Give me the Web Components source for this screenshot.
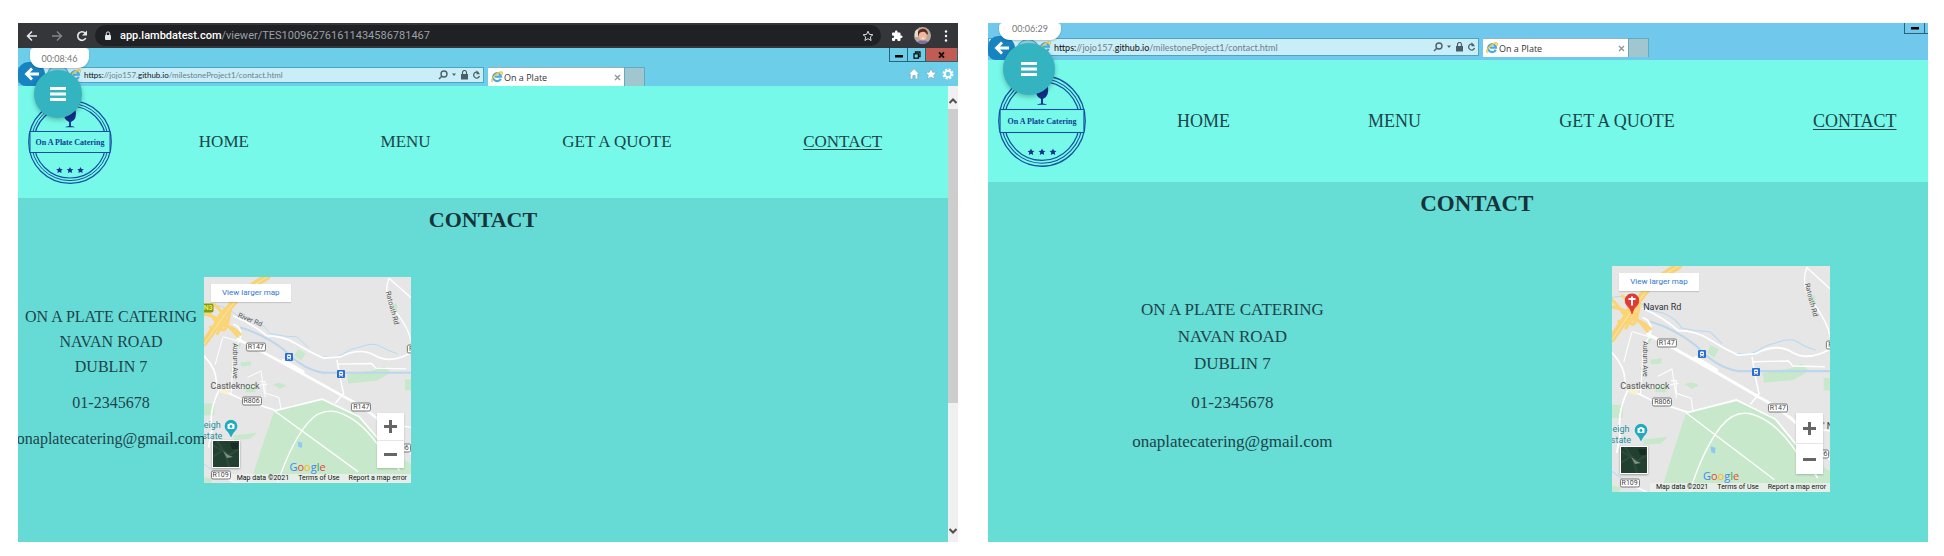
<!DOCTYPE html>
<html lang="en">
<head>
<meta charset="utf-8">
<title>On a Plate - Contact</title>
<style>
  html, body { margin: 0; background: #fff; }
  body {
    box-sizing: border-box; min-height: 100vh; padding: 23px 16px 14px 18px;
    display: grid; grid-template-columns: 1fr 1fr; gap: 30px;
    font-family: "Liberation Serif", serif; color: #1d434a;
  }
  .small {
    --strip: #6dcee9; --strip-h: 38px; --bar-top: 19px; --bar-h: 16px; --url-w: 466px; --tab-w: 136px; --url: 8px;
    --nav: 17px; --nav-pad: 14px; --logo-w: 84px; --logo-h: 84px; --logo-box: 115px;
    --h: 22px; --h-line: 26px; --h-top: 9px; --h-gap: 44px;
    --txt: 16px; --line: 25px; --gap: 11px; --addr-top: 27px;
    --map-w: 207px; --map-h: 206px; --cols: 20% 1fr; --map-place: start; --foot: 15px; --zoom-h: 55px;
    --page: #66dbd6; --badge-w: 59px; --badge-h: 20px; --badge-x: 12px; --fab: 48px; --fab-x: 16px; --fab-y: 22px; --badge-pad: 0px;
  }
  .large {
    --strip: #70c8ec; --strip-h: 37px; --bar-top: 15px; --bar-h: 18px; --url-w: 491px; --tab-w: 145px; --url: 9px;
    --nav: 18px; --nav-pad: 15px; --logo-w: 88px; --logo-h: 92px; --logo-box: 120px; --page-w: 104%;
    --h: 23px; --h-line: 28px; --h-top: 8px; --h-gap: 48px;
    --txt: 17px; --line: 27px; --gap: 12px; --addr-top: 30px;
    --map-w: 218px; --map-h: 226px; --cols: 1fr 1fr; --map-place: center; --foot: 18px; --zoom-h: 61px;
    --page: #66ddd5; --badge-w: 62px; --badge-h: 17px; --badge-x: 11px; --fab: 52px; --fab-x: 15px; --fab-y: 20px; --badge-pad: 6px;
  }
</style>
</head>
<body>
<screen-view class="small">
  <chrome-bar slot="top"></chrome-bar>
  <session-badge slot="badge">00:08:46</session-badge>
  <ie-bar slot="bar" controls="full"></ie-bar>
  <site-page></site-page>
  <scroll-rail slot="rail"></scroll-rail>
</screen-view>
<screen-view class="large">
  <session-badge slot="badge">00:06:29</session-badge>
  <ie-bar slot="bar" controls="cut"></ie-bar>
  <site-page pinned></site-page>
</screen-view>

<script>
const base = `<style>
  *{box-sizing:border-box} button{border:0;padding:0;margin:0;background:none;font:inherit;color:inherit;display:flex;align-items:center;justify-content:center}
  svg{display:block} a{color:inherit;text-decoration:none}
</style>`;
function define(name, markup) {
  customElements.define(name, class extends HTMLElement {
    constructor() {
      super();
      this.attachShadow({ mode: 'open' }).innerHTML = base + (typeof markup === 'function' ? '' : markup);
    }
    connectedCallback() {
      if (typeof markup === 'function') this.shadowRoot.innerHTML = base + markup(this);
    }
  });
}

const ieLogo = `<svg width="12" height="12" viewBox="0 0 24 24"><path d="M19.5 15.5a8 8 0 1 1 .6-4.2H8" fill="none" stroke="#4aa9df" stroke-width="4.2"/><path d="M3 22C-2 18 8 5 19 2c5-1 4 3 2 6" fill="none" stroke="#efc53a" stroke-width="2.6"/></svg>`;

define('screen-view', `<style>
  :host{display:flex;flex-direction:column;min-width:0;overflow:hidden;background:var(--page)}
  .ie{position:relative;flex:1;display:flex;flex-direction:column}
  .row{flex:1;display:flex}
  .page{flex:1;min-width:0;overflow:hidden;display:flex}
</style>
<slot name="top"></slot>
<div class="ie"><slot name="bar"></slot>
  <div class="row"><div class="page"><slot></slot></div><slot name="rail"></slot></div>
  <slot name="badge"></slot></div>`);

define('chrome-bar', `<style>
  :host{display:flex;align-items:center;height:25px;background:#35363a;color:#fff;font-family:Roboto,sans-serif;padding:0 8px}
  .nav{display:flex;gap:13px;width:69px;align-items:center}
  .omni{flex:1;height:21px;border-radius:11px;background:#202124;display:flex;align-items:center;padding:0 7px 0 9px;gap:8px;color:#9aa0a6;font-size:11px}
  .omni b{font-weight:500;color:#fff} .omni span{flex:1;white-space:nowrap}
  .tools{display:flex;align-items:center;gap:11px;padding-left:10px}
</style>
<div class="nav">
  <button aria-label="Back"><svg width="12" height="12" viewBox="0 0 12 12" fill="none" stroke="#e8eaed" stroke-width="1.5"><path d="M11 6H2M6 1.5L1.5 6 6 10.5"/></svg></button>
  <button aria-label="Forward"><svg width="12" height="12" viewBox="0 0 12 12" fill="none" stroke="#83868a" stroke-width="1.4"><path d="M1 6h9M6 1.5L10.500 6 6 10.500"/></svg></button>
  <button aria-label="Reload"><svg width="12" height="12" viewBox="0 0 12 12" fill="none" stroke="#e8eaed" stroke-width="1.6"><path d="M9.800 8.200A4.300 4.300 0 1 1 9.300 3.200"/><path d="M11 .5v5H6z" fill="#e8eaed" stroke="none"/></svg></button>
</div>
<div class="omni">
  <svg width="8" height="10" viewBox="0 0 8 10"><rect x="1" y="4" width="6" height="5" rx="1" fill="#e8eaed"/><path d="M2.300 4V2.600a1.700 1.700 0 0 1 3.400 0V4" fill="none" stroke="#e8eaed"/></svg>
  <span><b>app.lambdatest.com</b>/viewer/TES100962761611434586781467</span>
  <button aria-label="Bookmark"><svg width="12" height="12" viewBox="0 0 12 12"><path d="M6 1.200l1.400 3.200 3.500.3-2.600 2.300.8 3.500L6 8.700 2.900 10.500l.8-3.500L1.100 4.700l3.500-.3z" fill="none" stroke="#dadce0"/></svg></button>
</div>
<div class="tools">
  <button aria-label="Extensions"><svg width="12" height="12" viewBox="0 0 24 24" fill="#fff"><path d="M20.500 11H19V7a2 2 0 0 0-2-2h-4V3.500a2.500 2.500 0 0 0-5 0V5H4a2 2 0 0 0-2 2v3.800h1.500a2.700 2.700 0 0 1 0 5.400H2V20a2 2 0 0 0 2 2h3.800v-1.500a2.700 2.700 0 0 1 5.400 0V22H17a2 2 0 0 0 2-2v-4h1.500a2.500 2.500 0 0 0 0-5z"/></svg></button>
  <button aria-label="Profile"><svg width="17" height="17" viewBox="0 0 17 17"><clipPath id="c"><circle cx="8.500" cy="8.500" r="8.500"/></clipPath><g clip-path="url(#c)"><rect width="17" height="17" fill="#b8a99b"/><path d="M2 17c1-5 12-5 14 0z" fill="#7b6ea8"/><ellipse cx="8.800" cy="8.600" rx="4" ry="5" fill="#f0b79d"/><path d="M3.500 8C3 1 13-1 14 6.500L13 8c-1-3-3-3.500-5-3C6 5 5 6 4.700 9z" fill="#5f2920"/><path d="M7 10.800h4q-2 2.200-4 0" fill="#fff"/><path d="M1 3h3v7H1z" fill="#e4dccb"/></g></svg></button>
  <button aria-label="Menu"><svg width="8" height="12" viewBox="0 0 8 12" fill="#fff"><circle cx="4" cy="1.500" r="1.200"/><circle cx="4" cy="6" r="1.200"/><circle cx="4" cy="10.500" r="1.200"/></svg></button>
</div>`);

define('ie-bar', el => `<style>
  :host{position:relative;display:flex;align-items:flex-start;height:var(--strip-h);background:var(--strip);overflow:hidden;font-family:"Open Sans",sans-serif;font-size:9px;color:#333}
  .addr{width:var(--url-w);margin-top:var(--bar-top);height:var(--bar-h);background:#c9eef8;border:1px solid #4fa3c4;display:flex;align-items:center;gap:3px;padding:0 2px 0 50px;color:#6e8087}
  .url{flex:1;font-family:Lato,sans-serif;font-size:var(--url);white-space:nowrap} .url b{font-weight:400;color:#111}
  .tab{width:var(--tab-w);margin:var(--bar-top) 0 0 4px;height:19px;background:#fff;border-top:1px solid #8fb4c2;display:flex;align-items:center;gap:1px;padding:0 3px}
  .tab span{flex:1}
  .new{width:21px;height:19px;margin-top:var(--bar-top);background:#a0c7d0;border:1px solid #62a9c2;border-bottom:0}
  .back{position:absolute;left:0;bottom:0;width:27px;height:24px;background:#1783c1;border-radius:11px 13px 12px 8px}
  .fwd{position:absolute;left:29px;bottom:1px;width:22px;height:20px;background:#8fd3ea;border:1px solid #4fa3c4;border-radius:50%}
  .right{margin-left:auto;display:flex;flex-direction:column;align-items:flex-end;gap:6px}
  .win{display:flex;height:14px;border:1px solid #2b6374;border-top:0}
  .win button{width:18px;border-right:1px solid #2b6374;color:#111} .win button.x{width:31px;background:#c15c55;border:0}
  .ico{display:flex;gap:5px;padding-right:4px}
  .cutwin{display:flex;height:11px;border-bottom:1px solid #2b6374;border-left:1px solid #2b6374;padding-right:3px}
  .cutwin button{width:20px;border-right:1px solid #2b6374}
</style>
<div class="addr">${ieLogo}
  <span class="url"><b>https:</b>//jojo157.<b>github.io</b>/milestoneProject1/contact.html</span>
  <button aria-label="Search"><svg width="10" height="10" viewBox="0 0 10 10" fill="none" stroke="#4d6067" stroke-width="1.400"><circle cx="6" cy="4" r="3"/><path d="M4 6L1 9"/></svg></button>
  <svg width="6" height="4" viewBox="0 0 6 4"><path d="M1 .5h4L3 3z" fill="#4d6067"/></svg>
  <svg width="9" height="10" viewBox="0 0 9 10"><rect x="1" y="4" width="7" height="5.500" fill="#4d5f66"/><path d="M2.500 4V2.500a2 2 0 0 1 4 0V4" fill="none" stroke="#4d5f66" stroke-width="1.200"/></svg>
  <button aria-label="Refresh"><svg width="9" height="10" viewBox="0 0 9 10" fill="none" stroke="#4d6067" stroke-width="1.300"><path d="M6.500 2.700A3 3 0 1 0 7.500 6"/><path d="M4.500.2v4h3.500z" fill="#4d6067" stroke="none"/></svg></button>
</div>
<div class="tab">${ieLogo}<span>On a Plate</span><button aria-label="Close tab"><svg width="7" height="7" viewBox="0 0 7 7" stroke="#8c9599" stroke-width="1.300"><path d="M1 1l5 5M6 1L1 6"/></svg></button></div>
<button class="new" aria-label="New tab"></button>
<div class="right">${el.getAttribute('controls') === 'full' ? `
  <div class="win">
    <button aria-label="Minimize"><svg width="8" height="8"><rect y="4" width="8" height="2.500"/></svg></button>
    <button aria-label="Restore"><svg width="8" height="8" fill="none" stroke="#111" stroke-width="1.300"><path d="M2.500 2.500V1H7v4.500H5.500"/><rect x="1" y="2.800" width="4.400" height="4.400"/></svg></button>
    <button class="x" aria-label="Close"><svg width="7" height="8" stroke="#111" stroke-width="1.800"><path d="M1 1.300l5 5.400M6 1.300L1 6.700"/></svg></button>
  </div>
  <div class="ico">
    <button aria-label="Home"><svg width="12" height="12" viewBox="0 0 12 12"><path d="M6 .8L.8 6h1.500v5h2.500V7.500h2.400V11h2.500V6h1.500z" fill="#fff" stroke="#6c98a8" stroke-width=".5"/></svg></button>
    <button aria-label="Favourites"><svg width="12" height="12" viewBox="0 0 12 12"><path d="M6 .5l1.600 3.700 4 .3-3 2.600 1 4L6 9 2.400 11.100l1-4-3-2.600 4-.3z" fill="#fff" stroke="#6c98a8" stroke-width=".5"/></svg></button>
    <button aria-label="Tools"><svg width="12" height="12" viewBox="0 0 12 12"><circle cx="6" cy="6" r="4.500" fill="none" stroke="#fff" stroke-width="2" stroke-dasharray="2.200 1.330"/><circle cx="6" cy="6" r="3.100" fill="none" stroke="#fff" stroke-width="1.700"/></svg></button>
  </div>` : `
  <div class="cutwin"><button aria-label="Minimize"><svg width="8" height="8"><rect y="3" width="8" height="2.500"/></svg></button></div>`}
</div>
<span class="fwd"></span>
<button class="back" aria-label="Back"><svg width="16" height="14" viewBox="0 0 16 14" fill="none" stroke="#fff" stroke-width="2.800"><path d="M15 7H3M8 1.500L2.500 7 8 12.500"/></svg></button>`);

define('session-badge', `<style>
  :host{position:absolute;left:0;top:0;width:0;height:0;font-family:Lato,sans-serif}
  .time{position:absolute;left:var(--badge-x);top:0;width:var(--badge-w);height:var(--badge-h);padding-bottom:var(--badge-pad);background:#fff;border-radius:4px 4px 11px 11px;color:#777;font-size:9px;display:flex;align-items:center;justify-content:center;box-shadow:0 1px 2px #0003}
  .menu{position:absolute;left:var(--fab-x);top:var(--fab-y);width:var(--fab);height:var(--fab);border-radius:50%;background:#34b3c1;box-shadow:0 2px 5px #0004}
</style>
<div class="time"><slot></slot></div>
<button class="menu" aria-label="Menu"><svg width="16" height="14" fill="#fff"><rect width="16" height="3"/><rect y="5.500" width="16" height="3"/><rect y="11" width="16" height="3"/></svg></button>`);

define('scroll-rail', `<style>
  :host{display:flex;flex-direction:column;align-items:center;width:10px;background:#f0f0f0}
  button{height:23px;padding-top:6px} .thumb{width:100%;flex:293} .rest{flex:116} .thumb{background:#cdcdcd}
  .down{padding:0}
</style>
<button aria-label="Scroll up"><svg width="8" height="6" fill="none" stroke="#505050" stroke-width="2"><path d="M.5 5L4 1.500 7.500 5"/></svg></button>
<div class="thumb"></div><div class="rest"></div>
<button class="down" aria-label="Scroll down"><svg width="8" height="6" fill="none" stroke="#505050" stroke-width="2"><path d="M.5 1L4 4.500 7.500 1"/></svg></button>`);

define('plate-logo', `<style>
  :host{position:relative;display:grid;align-items:center;justify-items:center;width:var(--logo-w);height:var(--logo-h);color:#0f3f95}
  svg,span{grid-area:1/1} span{font-size:8px;font-weight:700;white-space:nowrap}
</style>
<svg width="100%" height="100%" viewBox="0 0 84 84" preserveAspectRatio="none" fill="none" stroke="#14509f">
  <circle cx="42" cy="42" r="41.300" stroke-width="1.200"/><circle cx="42" cy="42" r="38.600"/><circle cx="42" cy="42" r="36" stroke-width="1.200"/>
  <rect x="2" y="31.500" width="80" height="21" fill="#76f9e9"/>
  <g fill="#12308e" stroke="none"><path d="M36.500 9h11q2 11-4.600 13v4q3 .2 4 1.200h-9.800q1-1 4-1.200v-4Q34.500 20 36.500 9z"/>
  <path d="M31.500 67l1 2.100 2.300.2-1.700 1.500.5 2.300-2.100-1.200-2.100 1.200.5-2.300-1.700-1.500 2.300-.2z"/><path transform="translate(10.500)" d="M31.500 67l1 2.100 2.300.2-1.700 1.500.5 2.300-2.100-1.200-2.100 1.200.5-2.300-1.700-1.500 2.300-.2z"/><path transform="translate(21)" d="M31.500 67l1 2.100 2.300.2-1.700 1.500.5 2.300-2.100-1.200-2.100 1.200.5-2.300-1.700-1.500 2.300-.2z"/></g>
</svg><span>On A Plate Catering</span>`);

define('area-map', el => {
  const pin = el.hasAttribute('pinned');
  const at = (x, y) => `left:${Math.round((x - 41) / 6.21)}%;top:${Math.round((y - 38) / 6.19)}%`;
  const tag = (x, y, t) => `<span class="l tag" style="${at(x, y)}">${t}</span>`;
  const train = (x, y) => `<svg class="l" style="${at(x, y)}" width="8" height="8" viewBox="0 0 8 8"><rect width="8" height="8" rx="1" fill="#2a6fcf"/><rect x="2" y="1.500" width="4" height="4.300" rx="1" fill="#fff"/><path d="M2.800 3.600h2.400" stroke="#2a6fcf"/><path d="M2.500 6.700l.6-.7M5.500 6.700l-.6-.7" stroke="#fff"/></svg>`;
  return `<style>
  :host{position:relative;display:block;width:var(--map-w);height:var(--map-h);overflow:hidden;background:#e6e6e6;font-family:Roboto,sans-serif;color:#555}
  .land{width:100%;height:100%}
  .l{position:absolute;transform:translate(-50%,-50%);white-space:nowrap;font-size:9px;line-height:10px}
  .tag{font-size:7px;line-height:7px;border:1px solid #777;border-radius:2px;background:#fff;padding:0 1px;color:#444}
  .n3{background:#7c9a1c;color:#f4e94a;border:0;font-weight:700;padding:1px}
  .road{font-size:7px} .teal{color:#258f9e}
  .larger{position:absolute;left:7px;top:7px;background:#fff;color:#2f77cf;font-size:8px;line-height:18px;padding:0 11px;box-shadow:0 1px 1px #0002}
  .sat{position:absolute;left:8px;bottom:var(--foot);width:28px;height:28px;border:1px solid #fff;box-shadow:0 1px 2px #0005}
  .zoom{position:absolute;right:7px;bottom:var(--foot);width:27px;height:var(--zoom-h);background:#fff;display:flex;flex-direction:column;box-shadow:0 1px 2px #0003}
  .zoom button{flex:1} .zoom button+button{border-top:1px solid #e6e6e6}
  .goog{position:absolute;left:50%;bottom:10px;transform:translateX(-50%);font:500 11px/13px "Open Sans",sans-serif}
  .foot{position:absolute;right:0;bottom:0;display:flex;gap:9px;padding:0 4px 0 6px;background:#f2f2f2bb;font-size:7px;line-height:9px;color:#111;white-space:nowrap}
  </style>
  <svg class="land" viewBox="41 38 621 619" preserveAspectRatio="none" fill="none" stroke-linecap="round" stroke-linejoin="round">
    <g fill="#c7e8ca"><path d="M252 440L396 406 500 450 560 515 600 560 662 600V657H180Q215 545 252 440z"/><path d="M322 255l24 12-14 22-20-14zM470 332l80-14 32-12 20 20-44 24-84 8zM248 362q22-12 40 4l-20 8zM150 295l34-4-4 14-28 2zM165 362h30v22h-30zM608 120l12-2v26l-12-8zM644 345h18v34h-18zM41 418h32l-2 36H41zM130 514l70-8-20 18-50 4zM41 640l26 4-6 13H41zM142 236l12 2-8 14zM120 315l12 4-6 14z"/></g>
    <path d="M41 125Q90 110 150 160q60 5 90 48 40 10 80 10l34 32M400 278q40 5 60-10t50-20q40-15 60-2t50 22M41 600l40 30" stroke="#b4daf4" stroke-width="3"/>
    <path d="M150 190q70 20 130 66 60 62 120 70h262" stroke="#bcd7ec" stroke-width="6"/>
    <g stroke="#fff" stroke-width="5"><path d="M130 155q50 20 100 60 50 0 90 25t80 42l50-4q60-30 104-4t108-8"/><path d="M130 180q30 10 18 50M41 275q44 46 36 95l28 12 52 25 100 32 139-34 110 52 60 70 60 90M85 380q-30 60-20 118l-10 50"/><path d="M148 230l-18 30-8 132M90 380l140-20M172 340l40-20 10 66 44 14 6 36M210 352h14v46M97 220L75 300M100 218l60 18" stroke-width="3"/><path d="M252 440l250 182M262 657q40-120 90-180t120-20q60 30 120 130M596 42q-20 50 20 100t46 90M596 42l66 58M440 288q10 60 20 100l-24 28M444 300l100-2 12 14 90 2M600 480l62 10M100 640l40 17" stroke-width="4"/></g>
    <path d="M142 224Q280 296 458 396q110 54 204 172" stroke="#fff" stroke-width="8"/><path d="M280 292l56 32" stroke="#fff" stroke-width="14"/>
    <path d="M41 236L110 140q40-60 120-102" stroke="#f8d278" stroke-width="20"/><path d="M41 150q60 10 100 66M60 190q50-20 90 20M41 130q60 60 40 78M110 130q-40 30-20 60t30-60M70 120q30 20 40 60" stroke="#fbd575" stroke-width="9"/><path d="M41 240L110 142q40-60 120-104" stroke="#fff0b8" stroke-width="2"/>
    <path d="M322 532l14 4-2 16-10-4z" fill="#8ec8f5"/><path d="M92 372l24 8-4 12-22-6z" fill="#faf2ce"/>
  </svg>
  ${pin ? '' : `<span class="l road" style="${at(176, 170)};transform:translate(-50%,-50%) rotate(22deg)">River Rd</span>`}
  <span class="l road" style="${at(134, 294)};transform:translate(-50%,-50%) rotate(90deg)">Auburn Ave</span>
  <span class="l road" style="${at(606, 128)};transform:translate(-50%,-50%) rotate(75deg)">Ratoath Rd</span>
  ${tag(197, 247, 'R147')}${tag(182, 411, 'R806')}${tag(513, 425, 'R147')}${tag(90, 631, 'R109')}${tag(671, 257, 'R1')}${tag(637, 549, '806')}
  ${train(293, 282)}${train(451, 328)}
  <span class="l" style="${at(137, 363)}">Castleknock</span>
  <span class="l teal" style="${at(66, 486)}">eigh</span><span class="l teal" style="${at(66, 514)}">state</span>
  <svg class="l" style="${at(120, 497)}" width="14" height="19" viewBox="0 0 14 19"><path d="M7 18Q5 13 2 10.500A6.300 6.300 0 1 1 12 10.500Q9 13 7 18z" fill="#1fabc0"/><rect x="3.500" y="4.500" width="7" height="5" rx="1" fill="#fff"/><rect x="5.500" y="3.500" width="3" height="2" fill="#fff"/><circle cx="7" cy="7" r="1.400" fill="#1fabc0"/></svg>
  ${pin ? `<svg class="l" style="${at(97, 146)}" width="15" height="21" viewBox="0 0 15 21"><path d="M7.500 20.500Q6 14.500 2.500 12a7 7 0 1 1 10 0Q9 14.500 7.500 20.500z" fill="#e53935" stroke="#b3261e" stroke-width=".5"/><path d="M7.500 3v9M4 5.500h7" stroke="#fff" stroke-width="2"/></svg>
  <span class="l" style="${at(182, 149)};color:#333">Navan Rd</span><span class="l" style="${at(654, 478)};color:#333">' N</span>` : `<span class="l tag n3" style="${at(56, 131)}">N3</span>`}
  <a class="larger" href="#map">View larger map</a>
  <button class="sat" aria-label="Satellite view"><svg width="26" height="26" viewBox="0 0 26 26"><rect width="26" height="26" fill="#22402f"/><path d="M0 16l10-7 6 5 10-6M4 0l8 12 4 14M0 4l10 6" stroke="#2e4c3d" fill="none" stroke-width="2"/><path d="M10 10l5 4 5 2-6 1z" fill="#7f9480"/><path d="M17 2h8v6h-6z" fill="#182c26"/></svg></button>
  <div class="goog"><span style="color:#4285f4">G</span><span style="color:#ea4335">o</span><span style="color:#fbbc05">o</span><span style="color:#4285f4">g</span><span style="color:#34a853">l</span><span style="color:#ea4335">e</span></div>
  <div class="zoom"><button aria-label="Zoom in"><svg width="13" height="13" stroke="#666" stroke-width="3"><path d="M0 6.500h13M6.500 0v13"/></svg></button><button aria-label="Zoom out"><svg width="13" height="13" stroke="#666" stroke-width="3"><path d="M0 6.500h13"/></svg></button></div>
  <div class="foot"><span>Map data ©2021</span><a href="#terms">Terms of Use</a><a href="#report">Report a map error</a></div>`;
});

define('site-page', el => `<style>
  :host{flex:0 0 auto;width:var(--page-w,100%);display:flex;flex-direction:column;background:var(--page)}
  header{display:flex;align-items:center;background:#76f9e9;padding:var(--nav-pad) 0}
  .logo{width:var(--logo-box);padding-left:10px}
  nav{flex:1;display:flex;justify-content:space-around;font-size:var(--nav);line-height:22px}
  nav a[aria-current]{text-decoration:underline;text-underline-offset:2px;text-decoration-thickness:1px}
  h1{margin:0;padding:var(--h-top) 0 var(--h-gap);font-size:var(--h);line-height:var(--h-line);text-align:center;color:#17333a}
  main section{display:grid;grid-template-columns:var(--cols);align-items:start}
  address{font-style:normal;font-size:var(--txt);line-height:var(--line);text-align:center;padding-top:var(--addr-top);white-space:nowrap;display:flex;flex-direction:column;align-items:center;gap:var(--gap);min-width:0}
  p{margin:0} area-map{justify-self:var(--map-place)}
</style>
<header><div class="logo"><plate-logo></plate-logo></div>
<nav><a href="#home">HOME</a><a href="#menu">MENU</a><a href="#quote">GET A QUOTE</a><a href="#contact" aria-current="page">CONTACT</a></nav></header>
<main><h1>CONTACT</h1><section>
<address><p>ON A PLATE CATERING<br>NAVAN ROAD<br>DUBLIN 7</p><a href="tel:012345678">01-2345678</a><a href="mailto:onaplatecatering@gmail.com">onaplatecatering@gmail.com</a></address>
<area-map${el.hasAttribute('pinned') ? ' pinned' : ''}></area-map></section></main>`);
</script>
</body>
</html>
